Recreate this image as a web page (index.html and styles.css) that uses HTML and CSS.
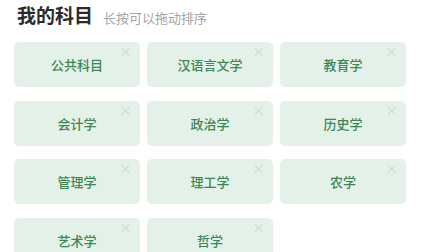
FILE: index.html
```html
<!DOCTYPE html>
<html lang="zh-CN">
<head>
    <meta charset="UTF-8">
    <meta name="viewport" content="width=device-width, initial-scale=1.0">
    <title>我的科目</title>
    <link rel="stylesheet" href="styles.css">
</head>
<body>
    <div class="cabecera">
        <span class="titulo">我的科目</span>
        <span class="subtitulo">长按可以拖动排序</span>
    </div>

    <div class="materias">
        <div class="materia">公共科目<span class="cerrar">×</span></div>
        <div class="materia">汉语言文学<span class="cerrar">×</span></div>
        <div class="materia">教育学<span class="cerrar">×</span></div>
        <div class="materia">会计学<span class="cerrar">×</span></div>
        <div class="materia">政治学<span class="cerrar">×</span></div>
        <div class="materia">历史学<span class="cerrar">×</span></div>
        <div class="materia">管理学<span class="cerrar">×</span></div>
        <div class="materia">理工学<span class="cerrar">×</span></div>
        <div class="materia">农学<span class="cerrar">×</span></div>
        <div class="materia">艺术学<span class="cerrar">×</span></div>
        <div class="materia">哲学<span class="cerrar">×</span></div>
    </div>
</body>
</html>
```

FILE: styles.css
```css
body {
    margin: 0;
    background-color: #ffffff;
    font-family: "Noto Sans CJK SC", "Noto Sans", sans-serif;
    overflow: hidden;
}

.cabecera {
    display: flex;
    align-items: baseline;
    padding: 1px 0 0 17px;
    height: 40px;
    box-sizing: border-box;
}

.titulo {
    font-size: 19px;
    font-weight: bold;
    color: #2b2b2b;
}

.subtitulo {
    margin-left: 10px;
    font-size: 13px;
    color: #a3a3a3;
}

.materias {
    display: grid;
    grid-template-columns: repeat(3, 126px);
    column-gap: 7px;
    row-gap: 13.5px;
    padding: 2px 0 0 14px;
}

.materia {
    position: relative;
    height: 45px;
    display: flex;
    justify-content: center;
    align-items: center;
    background-color: #e4f1e8;
    border-radius: 5px;
    color: #3b8756;
    font-size: 13px;
    font-weight: 500;
}

/* X pequeña en la esquina */
.cerrar {
    position: absolute;
    top: 1px;
    right: 8px;
    font-size: 13px;
    font-weight: normal;
    line-height: 16px;
    color: #cdd8d1;
}
```
